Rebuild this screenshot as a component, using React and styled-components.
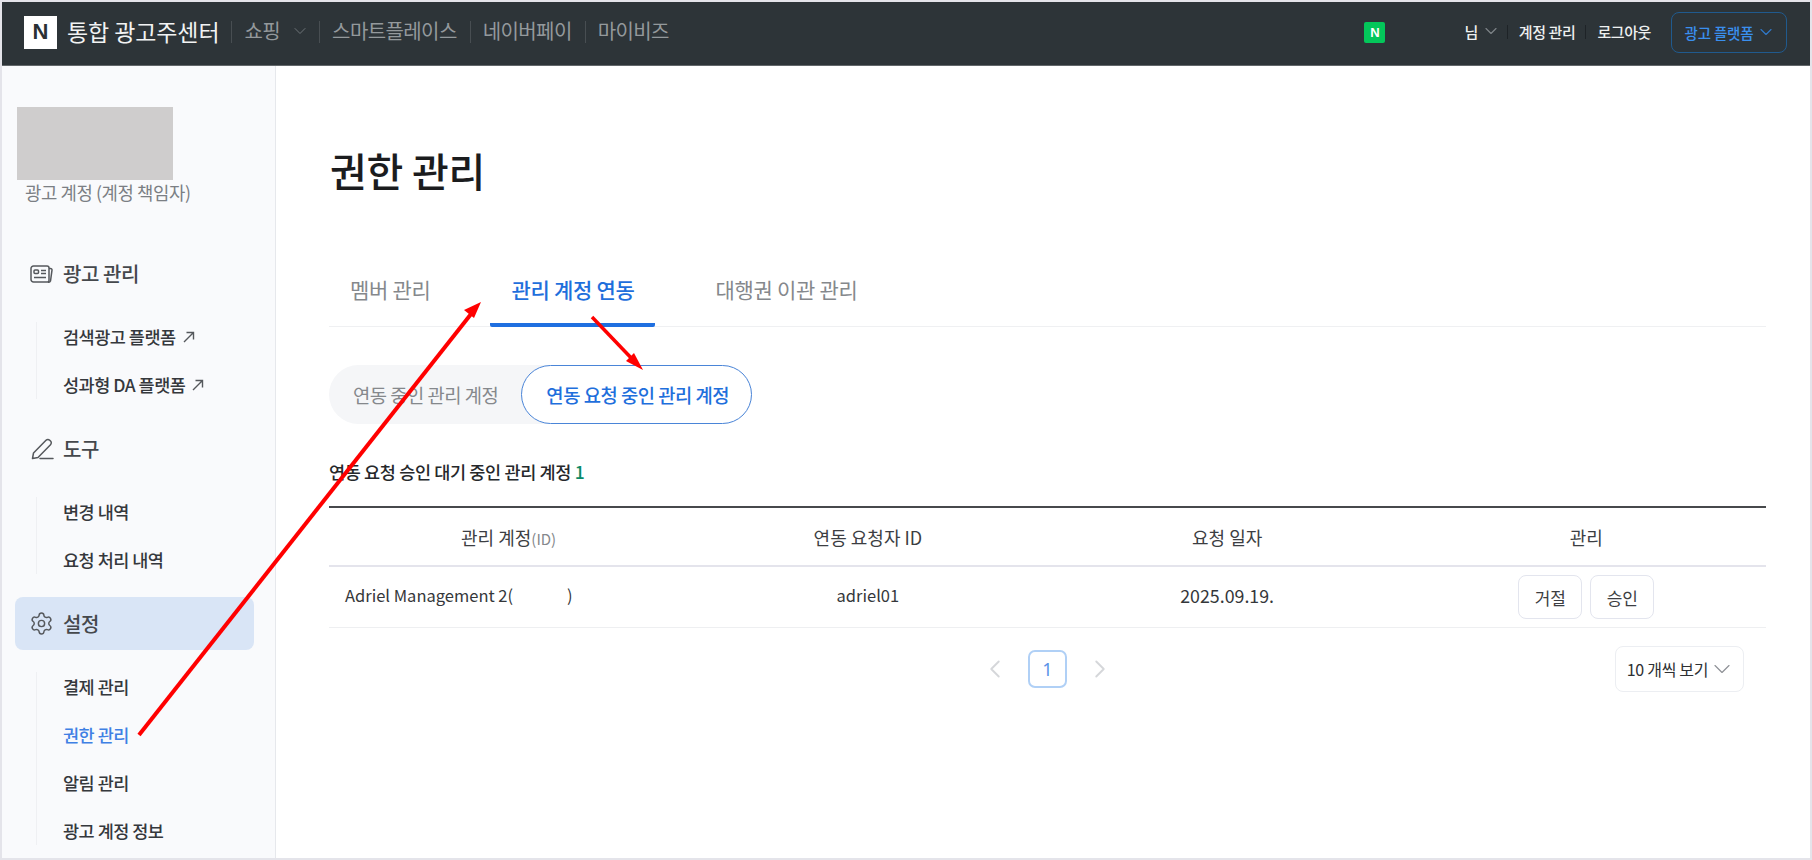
import React from "react";
import styled, { createGlobalStyle } from "styled-components";
import { ChevronDown, ChevronLeft, ChevronRight, Settings } from "lucide-react";

const GlobalStyle = createGlobalStyle`
  html, body {
    margin: 0;
    padding: 0;
  }
  body {
    font-family: "Noto Sans CJK KR", "Noto Sans", sans-serif;
  }
  * {
    box-sizing: border-box;
  }
`;

const Page = styled.div`
  position: relative;
  width: 1812px;
  height: 860px;
  padding: 2px;
  background: #e4e4ea;
  overflow: hidden;
  display: flex;
  flex-direction: column;
`;

const TopBar = styled.header`
  flex: none;
  height: 64px;
  display: flex;
  align-items: center;
  padding: 0 23px 3px 22px;
  background: #2d3438;
  border-bottom: 1px solid #62676a;
`;

const Logo = styled.div`
  width: 33px;
  height: 33px;
  display: flex;
  align-items: center;
  justify-content: center;
  margin-right: 10px;
  background: #fff;
  color: #2a3034;
  font-family: "Liberation Sans", sans-serif;
  font-size: 22px;
  font-weight: 700;
`;

const Brand = styled.div`
  margin-right: 12px;
  padding-bottom: 3px;
  color: #f2f3f3;
  font-size: 23px;
  letter-spacing: -0.1px;
`;

const TopNav = styled.nav`
  display: flex;
  align-items: center;
`;

const TopNavLink = styled.a`
  display: flex;
  align-items: center;
  gap: 10px;
  height: 22px;
  padding: 0 13px 3px 12px;
  border-left: 1px solid #484e52;
  color: #94999c;
  font-size: 20px;
  letter-spacing: -0.6px;
  svg {
    margin-right: -4px;
    color: #6e7478;
  }
`;

const TopRight = styled.div`
  display: flex;
  align-items: center;
  margin-left: auto;
`;

const NaverBadge = styled.div`
  width: 21px;
  height: 21px;
  display: flex;
  align-items: center;
  justify-content: center;
  margin-right: 68px;
  border-radius: 2px;
  background: #03c75a;
  color: #fff;
  font-family: "Liberation Sans", sans-serif;
  font-size: 13px;
  font-weight: 700;
`;

const UserLink = styled.a`
  display: flex;
  align-items: center;
  gap: 3px;
  height: 14px;
  padding: 0 10px 2px 11px;
  border-left: ${(props) => (props.$first ? "none" : "1px solid #1e2327")};
  color: #eef0f0;
  font-size: 15px;
  font-weight: 500;
  letter-spacing: -0.4px;
  svg {
    margin-right: -4px;
    color: #7d8387;
  }
`;

const PlatformButton = styled.button`
  width: 116px;
  height: 41px;
  display: flex;
  align-items: center;
  justify-content: center;
  gap: 3px;
  margin-left: 10px;
  padding: 0 0 0 3px;
  border: 1px solid #205a8e;
  border-radius: 8px;
  background: transparent;
  color: #3a8fee;
  font-family: inherit;
  font-size: 14.5px;
  font-weight: 500;
  letter-spacing: -0.2px;
  svg {
    color: #2f78c8;
  }
`;

const Body = styled.div`
  flex: 1;
  min-height: 0;
  display: flex;
`;

const Sidebar = styled.aside`
  flex: none;
  width: 274px;
  padding: 41px 21px 0 13px;
  background: #f9fafc;
  border-right: 1px solid #e6e8ec;
`;

const Avatar = styled.div`
  width: 156px;
  height: 73px;
  margin-left: 2px;
  background: #cfcdcd;
`;

const AccountRole = styled.div`
  margin: 1px 0 43px 10px;
  color: #7b7f84;
  font-size: 17.8px;
  line-height: 23px;
  letter-spacing: -0.4px;
`;

const MenuTitle = styled.div`
  height: 53px;
  display: flex;
  align-items: center;
  gap: 10px;
  margin-top: ${(props) => (props.$first ? "0" : "23px")};
  padding-left: 15px;
  border-radius: 8px;
  background: ${(props) => (props.$active ? "#d9e5f6" : "transparent")};
  color: #45484c;
  font-size: 20px;
  font-weight: 500;
  letter-spacing: -0.4px;
`;

const IconSlot = styled.span`
  flex: none;
  width: 23px;
  display: flex;
  align-items: center;
  justify-content: center;
  color: #55585c;
  svg {
    flex: none;
  }
`;

const SubMenu = styled.ul`
  display: flex;
  flex-direction: column;
  gap: 19px;
  list-style: none;
  margin: 22px 0 0 21px;
  padding: 0 0 0 26px;
  border-left: 1px solid #eff0f3;
`;

const SubItem = styled.li`
  height: 29px;
  display: flex;
  align-items: center;
  gap: 7px;
  color: ${(props) => (props.$active ? "#3f80e4" : "#35383c")};
  font-size: 17.5px;
  font-weight: 500;
  letter-spacing: -0.5px;
  svg {
    color: #55585c;
  }
`;

const Main = styled.main`
  flex: 1;
  min-width: 0;
  padding: 76px 44px 0 53px;
  background: #fff;
`;

const Title = styled.h1`
  margin: 0 0 65px 1px;
  color: #1b1c1e;
  font-size: 40px;
  font-weight: 500;
  line-height: 56px;
  letter-spacing: -0.2px;
`;

const Tabs = styled.div`
  display: flex;
  gap: 39px;
  height: 64px;
  border-bottom: 1px solid #eff0f2;
`;

const Tab = styled.a`
  display: flex;
  align-items: flex-start;
  justify-content: center;
  height: 64px;
  padding: 12px 21px 0;
  border-bottom: 4px solid ${(props) => (props.$active ? "#1f6fe0" : "transparent")};
  border-radius: ${(props) => (props.$active ? "0 0 2px 2px" : "0")};
  color: ${(props) => (props.$active ? "#1f6fdc" : "#85888c")};
  font-size: 21px;
  font-weight: ${(props) => (props.$active ? 500 : 400)};
  line-height: 28px;
  letter-spacing: -0.3px;
`;

const Segment = styled.div`
  display: inline-flex;
  align-items: center;
  height: 59px;
  margin-top: 38px;
  border-radius: 30px;
  background: #f5f6f8;
`;

const SegmentItem = styled.button`
  height: 59px;
  padding: 0 ${(props) => (props.$active ? "22px 0 24px" : "23px 0 24px")};
  border: ${(props) => (props.$active ? "1.5px solid #4a85d8" : "none")};
  border-radius: 30px;
  background: ${(props) => (props.$active ? "#fff" : "transparent")};
  color: ${(props) => (props.$active ? "#1f6fdc" : "#85888c")};
  font-family: inherit;
  font-size: 18.8px;
  font-weight: ${(props) => (props.$active ? 500 : 400)};
  letter-spacing: -0.5px;
`;

const Count = styled.div`
  margin-top: 36px;
  color: #26282b;
  font-size: 17.5px;
  font-weight: 500;
  line-height: 24px;
  letter-spacing: -0.35px;
  b {
    color: #0b8a68;
    font-weight: 500;
  }
`;

const Table = styled.div`
  margin-top: 22px;
  border-top: 2px solid #47494c;
`;

const Row = styled.div`
  display: grid;
  grid-template-columns: repeat(4, 1fr);
  align-items: center;
  height: ${(props) => (props.$head ? "59px" : "61px")};
  border-bottom: ${(props) => (props.$head ? "2px solid #e4e4ec" : "1px solid #eeeff1")};
  color: ${(props) => (props.$head ? "#3c3e42" : "#35373a")};
  font-size: ${(props) => (props.$head ? "18px" : "16.5px")};
`;

const Cell = styled.div`
  display: flex;
  align-items: center;
  justify-content: ${(props) => (props.$left ? "flex-start" : "center")};
  gap: 8px;
  padding-left: ${(props) => (props.$left ? "16px" : "0")};
  padding-bottom: ${(props) => (props.$raised ? "5px" : "0")};
`;

const Muted = styled.span`
  color: #85888c;
  font-size: 15px;
`;

const Masked = styled.span`
  display: inline-block;
  width: 54px;
`;

const DateText = styled.span`
  font-size: 17.8px;
`;

const ActionButton = styled.button`
  width: 64px;
  height: 44px;
  padding: 0;
  border: 1px solid #e3e5ee;
  border-radius: 8px;
  background: #fff;
  color: #3c3e42;
  font-family: inherit;
  font-size: 17px;
`;

const TableFooter = styled.div`
  position: relative;
  display: flex;
  align-items: center;
  justify-content: center;
  gap: 18px;
  height: 38px;
  margin-top: 22px;
  svg {
    color: #d5d7da;
  }
`;

const PageNumber = styled.button`
  width: 39px;
  height: 38px;
  padding: 0;
  border: 2px solid #b0d0f6;
  border-radius: 7px;
  background: #fff;
  color: #5b93e8;
  font-family: "Noto Sans", sans-serif;
  font-size: 18px;
`;

const PageSize = styled.button`
  position: absolute;
  top: -4px;
  right: 22px;
  width: 129px;
  height: 46px;
  display: flex;
  align-items: center;
  justify-content: center;
  padding: 0 2px 0 0;
  border: 1px solid #eceef2;
  border-radius: 8px;
  background: #fff;
  color: #2e3033;
  font-family: inherit;
  font-size: 16px;
  letter-spacing: -0.3px;
  svg {
    flex: none;
    margin-right: -6px;
    color: #8e9196;
  }
`;

const ArrowLayer = styled.svg`
  position: absolute;
  top: 0;
  left: 0;
  pointer-events: none;
`;

function AdIcon() {
  return (
    <svg width="23" height="20" viewBox="0 0 23 20" fill="none" stroke="currentColor" strokeWidth="1.5">
      <path d="M3.5 2h13.5a2 2 0 0 1 2 2v12.5a1.5 1.5 0 0 1-1.5 1.5H3.5A2.5 2.5 0 0 1 1 15.5V4.5A2.5 2.5 0 0 1 3.5 2z" />
      <path d="M19 4.5h1.5a1.5 1.5 0 0 1 1.5 1.7L20.5 17a2 2 0 0 1-2.5 1" />
      <rect x="4" y="6" width="4.5" height="3.5" rx="1" />
      <path d="M11 6.5h5M11 9.5h5M4 13.5h12" />
    </svg>
  );
}

function PencilIcon() {
  return (
    <svg width="24" height="24" viewBox="0 0 24 24" fill="none" stroke="currentColor" strokeWidth="1.5" strokeLinecap="round" strokeLinejoin="round">
      <path d="M2.5 21.5l1-5.5L16 3.2a2.6 2.6 0 0 1 3.7 0l.8.8a2.6 2.6 0 0 1 0 3.7L8 20.5z" />
      <path d="M10 21.5h13" />
    </svg>
  );
}

function ExternalArrow() {
  return (
    <svg width="12" height="12" viewBox="0 0 12 12" fill="none" stroke="currentColor" strokeWidth="1.4">
      <path d="M1 11L10.5 1.5M3.5 1.5h7v7" />
    </svg>
  );
}

export default function App() {
  return (
    <Page>
      <GlobalStyle />
      <TopBar>
        <Logo>N</Logo>
        <Brand>통합 광고주센터</Brand>
        <TopNav>
          <TopNavLink>
            쇼핑
            <ChevronDown size={20} strokeWidth={1.2} />
          </TopNavLink>
          <TopNavLink>스마트플레이스</TopNavLink>
          <TopNavLink>네이버페이</TopNavLink>
          <TopNavLink>마이비즈</TopNavLink>
        </TopNav>
        <TopRight>
          <NaverBadge>N</NaverBadge>
          <UserLink $first>
            님
            <ChevronDown size={20} strokeWidth={1.4} />
          </UserLink>
          <UserLink>계정 관리</UserLink>
          <UserLink>로그아웃</UserLink>
          <PlatformButton>
            광고 플랫폼
            <ChevronDown size={20} strokeWidth={1.4} />
          </PlatformButton>
        </TopRight>
      </TopBar>
      <Body>
        <Sidebar>
          <Avatar />
          <AccountRole>광고 계정 (계정 책임자)</AccountRole>
          <MenuTitle $first>
            <IconSlot>
              <AdIcon />
            </IconSlot>
            광고 관리
          </MenuTitle>
          <SubMenu>
            <SubItem>
              검색광고 플랫폼
              <ExternalArrow />
            </SubItem>
            <SubItem>
              성과형 DA 플랫폼
              <ExternalArrow />
            </SubItem>
          </SubMenu>
          <MenuTitle>
            <IconSlot>
              <PencilIcon />
            </IconSlot>
            도구
          </MenuTitle>
          <SubMenu>
            <SubItem>변경 내역</SubItem>
            <SubItem>요청 처리 내역</SubItem>
          </SubMenu>
          <MenuTitle $active>
            <IconSlot>
              <Settings size={25} strokeWidth={1.4} />
            </IconSlot>
            설정
          </MenuTitle>
          <SubMenu>
            <SubItem>결제 관리</SubItem>
            <SubItem $active>권한 관리</SubItem>
            <SubItem>알림 관리</SubItem>
            <SubItem>광고 계정 정보</SubItem>
          </SubMenu>
        </Sidebar>
        <Main>
          <Title>권한 관리</Title>
          <Tabs>
            <Tab>멤버 관리</Tab>
            <Tab $active>관리 계정 연동</Tab>
            <Tab>대행권 이관 관리</Tab>
          </Tabs>
          <Segment>
            <SegmentItem>연동 중인 관리 계정</SegmentItem>
            <SegmentItem $active>연동 요청 중인 관리 계정</SegmentItem>
          </Segment>
          <Count>
            연동 요청 승인 대기 중인 관리 계정 <b>1</b>
          </Count>
          <Table>
            <Row $head>
              <Cell>
                <span>
                  관리 계정<Muted>(ID)</Muted>
                </span>
              </Cell>
              <Cell>연동 요청자 ID</Cell>
              <Cell>요청 일자</Cell>
              <Cell>관리</Cell>
            </Row>
            <Row>
              <Cell $left $raised>
                <span>
                  Adriel Management 2(<Masked />)
                </span>
              </Cell>
              <Cell $raised>adriel01</Cell>
              <Cell $raised>
                <DateText>2025.09.19.</DateText>
              </Cell>
              <Cell>
                <ActionButton>거절</ActionButton>
                <ActionButton>승인</ActionButton>
              </Cell>
            </Row>
          </Table>
          <TableFooter>
            <ChevronLeft size={30} strokeWidth={1.5} />
            <PageNumber>1</PageNumber>
            <ChevronRight size={30} strokeWidth={1.5} />
            <PageSize>
              10 개씩 보기
              <ChevronDown size={28} strokeWidth={1} />
            </PageSize>
          </TableFooter>
        </Main>
      </Body>
      <ArrowLayer width="1812" height="860" viewBox="0 0 1812 860">
        <g stroke="#f00" strokeWidth="4" fill="#f00">
          <line x1="139" y1="735" x2="475" y2="309" />
          <polygon points="481,302 464,310 474,318" stroke="none" />
          <line x1="592" y1="317" x2="636" y2="363" strokeWidth="3.5" />
          <polygon points="643,370 634,353 626,361" stroke="none" />
        </g>
      </ArrowLayer>
    </Page>
  );
}
